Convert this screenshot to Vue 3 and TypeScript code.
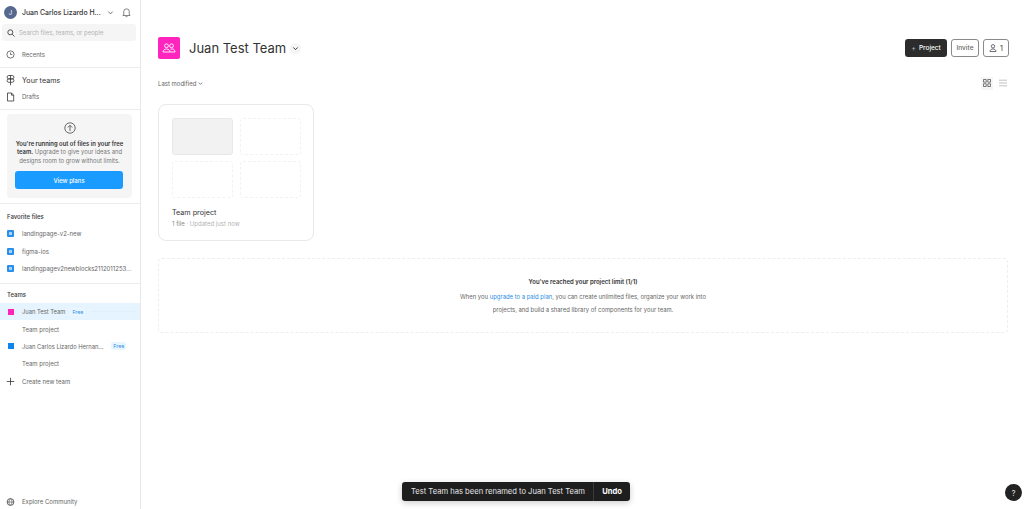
<script setup lang="ts">
const favorites: string[] = ['landingpage-v2-new', 'figma-ios', 'landingpagev2newblocks2112011253...']
const thumbs: number[] = [1, 2, 3, 4]
</script>

<template>
  <div class="page">
    <aside class="side">
      <div class="user">
        <span class="avatar">J</span>
        <span class="uname">Juan Carlos Lizardo H...</span>
        <svg class="uchev" width="7" height="7" viewBox="0 0 8 8"><path d="M1.500 3l2.500 2.500L6.500 3" fill="none" stroke="#555" stroke-width="1"/></svg>
        <svg class="bell" width="11" height="11" viewBox="0 0 12 12"><path d="M3 8.500V5a3 3 0 0 1 6 0v3.500l1 .8H2zM5 10.500h2" fill="none" stroke="#555" stroke-width=".8"/></svg>
      </div>
      <div class="search">
        <svg width="8" height="8" viewBox="0 0 8 8"><circle cx="3.300" cy="3.300" r="2.500" fill="none" stroke="#444" stroke-width=".9"/><path d="M5.200 5.200L7.500 7.500" stroke="#444" stroke-width=".9"/></svg>
        <span>Search files, teams, or people</span>
      </div>
      <div class="row recents">
        <svg class="ico" width="9" height="9" viewBox="0 0 10 10"><circle cx="5" cy="5" r="4" fill="none" stroke="#444" stroke-width=".8"/><path d="M5 2.800V5h2" fill="none" stroke="#444" stroke-width=".8"/></svg>
        <span>Recents</span>
      </div>
      <div class="rule first"></div>
      <div class="row yours">
        <svg class="ico" width="9" height="11" viewBox="-1 0 9 11"><path d="M1.800.5h3.400a1.700 1.700 0 0 1 0 3.400H1.800a1.700 1.700 0 0 1 0-3.400zM1.800 3.900h3.400a1.700 1.700 0 0 1 0 3.400H3.500M1.800 3.900a1.700 1.700 0 0 0 0 3.400h1.700M3.500.5v9.800" fill="none" stroke="#333" stroke-width=".8"/></svg>
        <span>Your teams</span>
      </div>
      <div class="row drafts">
        <svg class="ico" width="9" height="10" viewBox="0 0 9 10"><path d="M1.500 1h4l2.200 2.200V9h-6.200zM5.500 1v2.200h2.200" fill="none" stroke="#333" stroke-width=".8"/></svg>
        <span>Drafts</span>
      </div>
      <div class="rule second"></div>
      <section class="upgrade">
        <svg width="12" height="12" viewBox="0 0 12 12"><circle cx="6" cy="6" r="5.200" fill="none" stroke="#444" stroke-width=".8"/><path d="M6 9V3.500M3.800 5.500L6 3.300l2.200 2.200" fill="none" stroke="#444" stroke-width=".8"/></svg>
        <p><b>You're running out of files in your free team.</b> Upgrade to give your ideas and designs room to grow without limits.</p>
        <button class="plans">View plans</button>
      </section>
      <div class="rule third"></div>
      <h4 class="favs">Favorite files</h4>
      <div v-for="f in favorites" :key="f" class="row fav">
        <span class="file"><i></i></span>
        <span>{{ f }}</span>
      </div>
      <div class="rule fourth"></div>
      <h4 class="teams">Teams</h4>
      <div class="row team active">
        <span class="sq pink"></span>
        <span>Juan Test Team</span>
        <span class="free">Free</span>
        <span class="dots"></span>
      </div>
      <div class="row sub">Team project</div>
      <div class="row team">
        <span class="sq blue"></span>
        <span>Juan Carlos Lizardo Hernan...</span>
        <span class="free far">Free</span>
      </div>
      <div class="row sub">Team project</div>
      <div class="row create">
        <svg class="ico" width="9" height="9" viewBox="0 0 9 9"><path d="M4.500 .8v7.400M.8 4.500h7.400" stroke="#333" stroke-width=".8"/></svg>
        <span>Create new team</span>
      </div>
      <div class="row explore">
        <svg class="ico" width="9" height="8" viewBox="0 0 8 8"><circle cx="4" cy="4" r="3.400" fill="none" stroke="#444" stroke-width=".8"/><path d="M.6 4h6.800M4 .6c-2 2-2 4.800 0 6.800M4 .6c2 2 2 4.800 0 6.800" fill="none" stroke="#444" stroke-width=".6"/></svg>
        <span>Explore Community</span>
      </div>
    </aside>

    <main class="main">
      <header class="head">
        <div class="logo">
          <svg width="14" height="10" viewBox="0 0 14 10"><circle cx="4.500" cy="2.800" r="1.900" fill="none" stroke="#fff" stroke-width=".9"/><circle cx="9.500" cy="2.800" r="1.900" fill="none" stroke="#fff" stroke-width=".9"/><path d="M1 9c0-4 7-4 7 0zM8.500 6.200c2-.8 4.500 0 4.500 2.800H8" fill="none" stroke="#fff" stroke-width=".9"/></svg>
        </div>
        <h1>Juan Test Team</h1>
        <span class="tchev"><svg width="7" height="7" viewBox="0 0 8 8"><path d="M1.500 2.800L4 5.300l2.500-2.500" fill="none" stroke="#333" stroke-width="1.100"/></svg></span>
        <div class="actions">
          <button class="btn dark"><em>+</em> Project</button>
          <button class="btn invite">Invite</button>
          <button class="btn count">
            <svg width="8" height="8" viewBox="0 0 8 8"><circle cx="4" cy="2.300" r="1.700" fill="none" stroke="#333" stroke-width=".7"/><path d="M1 7.500c0-3.400 6-3.400 6 0z" fill="none" stroke="#333" stroke-width=".7"/></svg>
            1
          </button>
        </div>
      </header>
      <div class="sortbar">
        <span class="sort">Last modified <svg width="5" height="5" viewBox="0 0 6 6"><path d="M1 2l2 2 2-2" fill="none" stroke="#555" stroke-width=".9"/></svg></span>
        <div class="views">
          <span class="grid-v"><svg width="8" height="8" viewBox="0 0 8 8"><path d="M.5.500h2.700v2.700H.5zM4.800.500h2.700v2.700H4.800zM.5 4.800h2.700v2.700H.5zM4.800 4.800h2.700v2.700H4.800z" fill="none" stroke="#444" stroke-width=".7"/></svg></span>
          <svg width="8" height="8" viewBox="0 0 8 8"><path d="M0 1.200h8M0 4h8M0 6.800h8" stroke="#999" stroke-width=".6"/></svg>
        </div>
      </div>
      <article class="card">
        <div class="thumbs">
          <div v-for="t in thumbs" :key="t" class="thumb" :class="{ filled: t === 1 }"></div>
        </div>
        <div class="ctitle">Team project</div>
        <div class="cmeta"><span>1 file</span> · Updated just now</div>
      </article>
      <section class="limit">
        <strong>You've reached your project limit (1/1)</strong>
        <p>When you <a>upgrade to a paid plan</a>, you can create unlimited files, organize your work into<br>projects, and build a shared library of components for your team.</p>
      </section>
    </main>

    <div class="toast">
      <span class="msg">Test Team has been renamed to Juan Test Team</span>
      <span class="undo">Undo</span>
    </div>
    <div class="help">?</div>
  </div>
</template>

<style>
html, body { margin: 0; background: #fff; }
</style>

<style scoped>
.page { position: relative; width: 1024px; height: 509px; overflow: hidden; display: flex; font-family: Inter, "Liberation Sans", sans-serif; color: #333; background: #fff; }
.side { position: relative; width: 140px; height: 509px; border-right: 1px solid #e8e8e8; flex: none; font-size: 6px; }
.user { display: flex; align-items: center; height: 24px; padding-left: 4px; }
.avatar { width: 13px; height: 13px; border-radius: 50%; background: #56688f; color: #fff; font-size: 6px; display: flex; align-items: center; justify-content: center; }
.uname { margin-left: 5px; font-size: 6.900px; font-weight: 500; color: #333; white-space: nowrap; width: 85px; }
.bell { margin-left: 7px; }
.search { margin: 0 4px 0 2px; height: 17px; background: #f5f5f5; border-radius: 3px; display: flex; align-items: center; gap: 4px; padding-left: 5px; color: #b3b3b3; font-size: 6px; }
.row { display: flex; align-items: center; height: 17px; padding-left: 8px; color: #666; white-space: nowrap; }
.ico { width: 9px; margin: 0 7px 0 -2px; flex: none; }
.recents { margin-top: 5px; }
.rule { height: 1px; background: #ececec; }
.first { margin-top: 4px; }
.yours { margin-top: 4px; color: #333; font-size: 7.200px; }
.drafts { margin-top: -1px; }
.second { margin-top: 4px; }
.upgrade { margin: 4px 8px 0 7px; height: 84px; box-sizing: border-box; padding: 8px 8px 0; background: #f5f5f5; border-radius: 4px; text-align: center; color: #777; }
.upgrade svg { display: block; margin: 0 auto; }
.upgrade p { margin: 5.500px -4px 0; font-size: 5.900px; line-height: 8.700px; }
.upgrade b { font-weight: 600; color: #333; }
.plans { display: block; width: 108px; height: 18px; margin: 5.500px 0 0; border: 0; border-radius: 3px; background: #1a9bff; color: #fff; font: 500 6px Inter, "Liberation Sans", sans-serif; }
.third { margin-top: 5px; }
h4 { margin: 0; font-weight: 500; font-size: 6px; color: #333; }
.favs { margin: 9px 0 0 7px; line-height: 8px; }
.fav { padding-left: 7px; height: 17.500px; gap: 8px; }
.favs + .fav { margin-top: 4px; }
.file { width: 7px; height: 7px; background: #2a8fe8; border-radius: 1px; display: block; position: relative; }
.file i { position: absolute; left: 2px; top: 2px; width: 3px; height: 3px; background: #a5d3fa; }
.fourth { margin-top: 5px; }
.teams { margin: 7px 0 0 7px; line-height: 8px; }
.team { font-size: 5.800px; }
.teams + .team { margin-top: 4.500px; }
.active { background: #e5f4ff; margin-bottom: .5px; }
.sq { width: 6px; height: 6px; flex: none; margin-right: 8px; }
.pink { background: #ff24bd; }
.blue { background: #0d84f0; }
.free { margin-left: 5px; padding: 1px 2px; border-radius: 2px; color: #2c8fe6; background: #eaf6ff; font-size: 5.300px; }
.far { margin-left: 8px; }
.dots { flex: 1; margin: 0 2px 0 6px; border-top: 1px dotted #d8ecfa; }
.sub { padding-left: 22px; }
.create { margin-top: 1px; }
.explore { position: absolute; left: 0; bottom: -1px; }
.main { flex: 1; min-width: 0; padding: 37px 15px 0 17px; box-sizing: border-box; position: relative; }
.head { display: flex; align-items: center; height: 22px; }
.logo { width: 22px; height: 22px; border-radius: 2px; background: #ff24bd; display: flex; align-items: center; justify-content: center; }
h1 { margin: 0 0 0 9px; font-size: 13px; font-weight: 400; color: #333; }
.tchev { margin-left: 4px; width: 11px; height: 11px; border-radius: 50%; background: #f5f5f5; display: flex; align-items: center; justify-content: center; }
.actions { margin-left: auto; display: flex; gap: 4px; }
.btn { height: 18px; box-sizing: border-box; border-radius: 3px; font: 500 6.500px Inter, "Liberation Sans", sans-serif; display: flex; align-items: center; justify-content: center; padding: 0; }
.dark { width: 42px; border: 0; background: #2c2c2c; color: #fff; gap: 3px; }
.dark em { font-style: normal; color: #aaa; font-size: 7px; }
.invite { width: 28px; background: #fff; border: 1px solid #8a8a8a; color: #666; }
.count { width: 26px; background: #fff; border: 1px solid #8a8a8a; color: #555; gap: 3px; font-size: 7px; }
.sortbar { display: flex; align-items: center; justify-content: space-between; margin-top: 17px; height: 14px; }
.sort { font-size: 6px; color: #666; display: flex; align-items: center; gap: 2px; }
.views { display: flex; align-items: center; gap: 6px; padding-right: 2px; }
.grid-v { width: 12px; height: 13px; background: #f5f5f5; display: flex; align-items: center; justify-content: center; }
.card { width: 156px; height: 137px; margin-top: 14px; box-sizing: border-box; border: 1px solid #e8e8e8; border-radius: 8px; padding: 13px 13px 0; }
.thumbs { display: grid; grid-template-columns: 61px 61px; grid-auto-rows: 37px; column-gap: 7px; row-gap: 6px; }
.thumb { box-sizing: border-box; border: 1px dashed #f2f2f2; border-radius: 3px; }
.filled { background: #f2f2f2; border: 1px solid #e8e8e8; }
.ctitle { margin-top: 10px; font-size: 7.200px; color: #333; line-height: 10px; }
.cmeta { margin-top: 2px; font-size: 6px; color: #b3b3b3; line-height: 8px; }
.cmeta span { color: #888; }
.limit { margin-top: 17px; width: 850px; height: 75px; box-sizing: border-box; border: 1px dashed #eeeeee; border-radius: 4px; text-align: center; padding-top: 18px; font-size: 5.900px; color: #666; }
.limit strong { display: block; font-size: 6px; font-weight: 600; color: #333; line-height: 10px; }
.limit p { margin: 3px 0 0; line-height: 13px; }
.limit a { color: #2c8fe6; }
.toast { position: absolute; left: 402px; top: 482px; width: 228px; height: 19px; border-radius: 3px; background: #1e1e1e; color: #e6e6e6; display: flex; align-items: center; font-size: 7.600px; box-shadow: 0 2px 6px rgba(0,0,0,.2); }
.msg { padding-left: 9px; width: 192px; box-sizing: border-box; border-right: 1px solid #3a3a3a; line-height: 19px; white-space: nowrap; }
.undo { flex: 1; text-align: center; font-weight: 700; color: #fff; }
.help { position: absolute; left: 1005px; top: 484px; width: 17px; height: 17px; border-radius: 50%; background: #222; color: #ddd; font-size: 8px; display: flex; align-items: center; justify-content: center; }
</style>
